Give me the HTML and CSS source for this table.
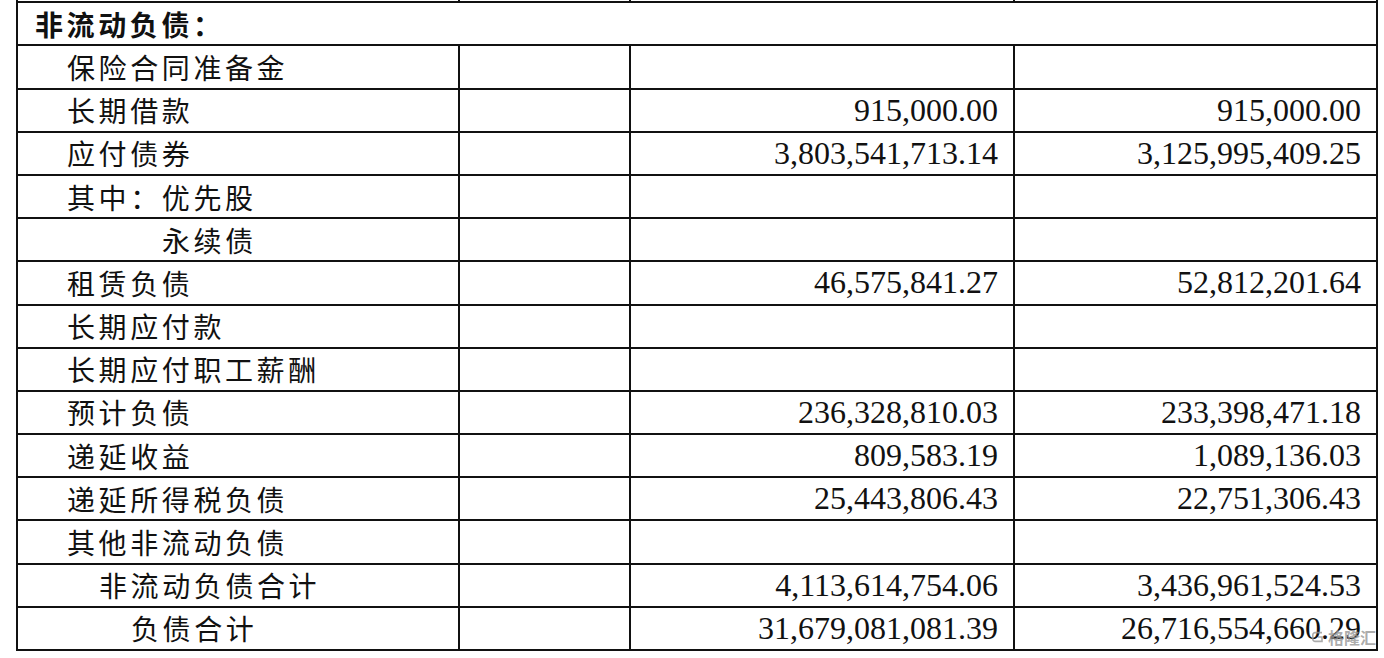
FILE: index.html
```html
<!DOCTYPE html>
<html lang="zh-CN">
<head>
<meta charset="utf-8">
<title>非流动负债</title>
<link rel="stylesheet" href="styles.css">
</head>
<body>
<div class="page">
  <table class="sheet">
    <colgroup>
      <col class="c-name"><col class="c-note"><col class="c-cur"><col class="c-prev">
    </colgroup>
    <tr class="cut"><td></td><td></td><td></td><td></td></tr>
    <tr><td class="head" colspan="4">非流动负债：</td></tr>
    <tr><td class="lbl">保险合同准备金</td><td></td><td class="num"></td><td class="num"></td></tr>
    <tr><td class="lbl">长期借款</td><td></td><td class="num">915,000.00</td><td class="num">915,000.00</td></tr>
    <tr><td class="lbl">应付债券</td><td></td><td class="num">3,803,541,713.14</td><td class="num">3,125,995,409.25</td></tr>
    <tr><td class="lbl">其中：优先股</td><td></td><td class="num"></td><td class="num"></td></tr>
    <tr><td class="lbl ind3">永续债</td><td></td><td class="num"></td><td class="num"></td></tr>
    <tr><td class="lbl">租赁负债</td><td></td><td class="num">46,575,841.27</td><td class="num">52,812,201.64</td></tr>
    <tr><td class="lbl">长期应付款</td><td></td><td class="num"></td><td class="num"></td></tr>
    <tr><td class="lbl">长期应付职工薪酬</td><td></td><td class="num"></td><td class="num"></td></tr>
    <tr><td class="lbl">预计负债</td><td></td><td class="num">236,328,810.03</td><td class="num">233,398,471.18</td></tr>
    <tr><td class="lbl">递延收益</td><td></td><td class="num">809,583.19</td><td class="num">1,089,136.03</td></tr>
    <tr><td class="lbl">递延所得税负债</td><td></td><td class="num">25,443,806.43</td><td class="num">22,751,306.43</td></tr>
    <tr><td class="lbl">其他非流动负债</td><td></td><td class="num"></td><td class="num"></td></tr>
    <tr><td class="lbl ind1">非流动负债合计</td><td></td><td class="num">4,113,614,754.06</td><td class="num">3,436,961,524.53</td></tr>
    <tr><td class="lbl ind2">负债合计</td><td></td><td class="num">31,679,081,081.39</td><td class="num">26,716,554,660.29</td></tr>
  </table>
  <div class="mark">
    <svg class="mark-icon" viewBox="0 0 20 20" width="16" height="16" aria-hidden="true">
      <path d="M15 4.5H6.5a3 3 0 0 0-3 3v5a3 3 0 0 0 3 3H15V10h-5" fill="none" stroke="currentColor" stroke-width="2"/>
    </svg>
    <span>格隆汇</span>
  </div>
</div>
</body>
</html>
```

FILE: styles.css
```css
html, body {
  margin: 0;
  padding: 0;
  background: #ffffff;
}

.page {
  position: relative;
  width: 1384px;
  height: 658px;
  overflow: hidden;
}

.sheet {
  border-collapse: collapse;
  table-layout: fixed;
  width: 1361px;
  margin: -42px 0 0 16px;
  color: #111;
}

.c-name { width: 442px; }
.c-note { width: 171px; }
.c-cur  { width: 384px; }
.c-prev { width: 363px; }

.sheet td {
  border: 2px solid #111;
  height: 41.2px;
  padding: 0;
  vertical-align: middle;
  white-space: nowrap;
}

.head {
  font-family: "Noto Sans CJK SC", "Noto Sans", sans-serif;
  font-size: 28px;
  font-weight: 700;
  letter-spacing: 3.6px;
  padding-left: 17px !important;
}

.lbl {
  font-family: "Noto Sans CJK SC", "Noto Sans", sans-serif;
  font-size: 28px;
  font-weight: 400;
  letter-spacing: 3.6px;
  padding-left: 49px !important;
}

.lbl.ind1 { padding-left: 81px !important; }
.lbl.ind2 { padding-left: 113px !important; }
.lbl.ind3 { padding-left: 144px !important; }

.num {
  font-family: "Liberation Serif", "Times New Roman", serif;
  font-size: 32px;
  text-align: right;
  padding-right: 15px !important;
}

.mark {
  position: absolute;
  left: 1310px;
  top: 628px;
  display: flex;
  align-items: center;
  gap: 2px;
  color: rgba(150, 150, 150, 0.8);
  font-family: "Noto Sans CJK SC", sans-serif;
  font-size: 16px;
  line-height: 18px;
  font-weight: 700;
}
```
